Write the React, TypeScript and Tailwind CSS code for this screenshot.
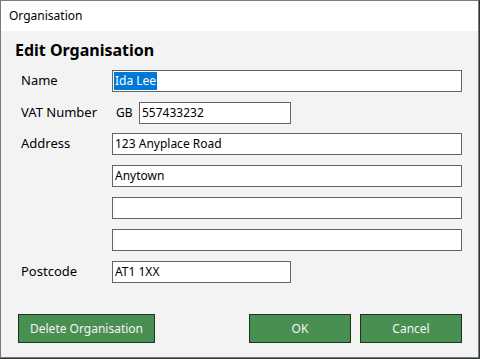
import React from 'react';

const font = { fontFamily: '"Segoe UI", "Noto Sans", "Open Sans", sans-serif' };

const Field: React.FC<{ value?: string; className?: string; selected?: boolean }> = ({ value = '', className = '', selected }) => (
  <div className={`h-[22px] bg-white border border-[#646464] flex items-center px-[1px] text-[12px] text-black whitespace-nowrap overflow-hidden ${className}`}>
    {selected ? <span className="bg-[#0078d7] text-white px-[1px] leading-[18px]">{value}</span> : <span className="px-[1px]">{value}</span>}
  </div>
);

const Label: React.FC<{ children: React.ReactNode }> = ({ children }) => (
  <div className="w-[97px] pl-[6px] h-[22px] flex items-center text-[13px] text-black">{children}</div>
);

const GreenButton: React.FC<{ children: React.ReactNode; className?: string }> = ({ children, className = '' }) => (
  <button className={`h-[29px] bg-[#4a8f52] border border-[#1c3320] text-[12px] text-[#f4f4f4] ${className}`}>{children}</button>
);

export default function App() {
  return (
    <div className="w-[480px] h-[359px] bg-[#2e3a30]" style={font}>
      <div className="w-[479px] h-[358px] border border-[#7a7a7a] bg-[#f3f3f3] flex flex-col">
        <div className="h-[30px] bg-white flex items-center pl-[8px] text-[12px] text-black">Organisation</div>

        <div className="flex-1 flex flex-col px-[14px]">
          <h1 className="pt-[9px] h-[29px] leading-[20px] text-[16px] font-bold text-black">Edit Organisation</h1>

          <div className="mt-[10px] flex">
            <Label>Name</Label>
            <Field value="Ida Lee" selected className="w-[350px]" />
          </div>

          <div className="mt-[10px] flex">
            <Label>VAT Number</Label>
            <div className="w-[27px] h-[22px] flex items-center pl-[4px] text-[12px] text-black">GB</div>
            <Field value="557433232" className="w-[152px]" />
          </div>

          <div className="mt-[9px] flex">
            <Label>Address</Label>
            <div className="flex flex-col gap-[10px]">
              <Field value="123 Anyplace Road" className="w-[350px]" />
              <Field value="Anytown" className="w-[350px]" />
              <Field className="w-[350px]" />
              <Field className="w-[350px]" />
            </div>
          </div>

          <div className="mt-[10px] flex">
            <Label>Postcode</Label>
            <Field value="AT1 1XX" className="w-[179px]" />
          </div>

          <div className="mt-[31px] flex items-center pl-[3px]">
            <GreenButton className="w-[137px]">Delete Organisation</GreenButton>
            <div className="flex-1" />
            <GreenButton className="w-[102px]">OK</GreenButton>
            <GreenButton className="w-[102px] ml-[9px] mr-[2px]">Cancel</GreenButton>
          </div>
        </div>
      </div>
    </div>
  );
}
